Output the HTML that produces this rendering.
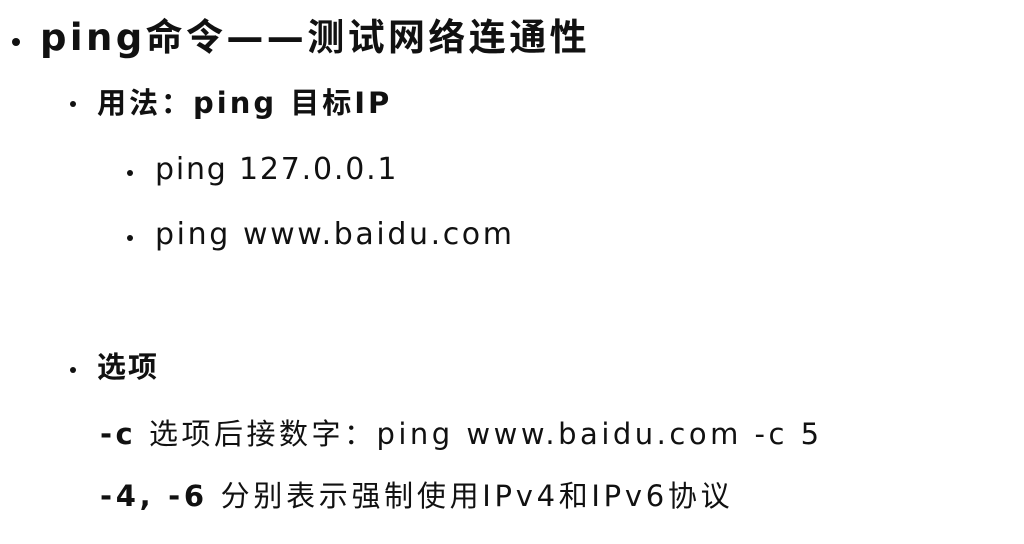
<!DOCTYPE html>
<html><head><meta charset="utf-8"><style>
html,body{margin:0;padding:0;background:#fff;width:1024px;height:544px;overflow:hidden}
body{font-family:"DejaVu Sans","Noto Sans CJK SC",sans-serif;color:#111;position:relative}
.l{position:absolute;white-space:nowrap;line-height:1}
.b{font-weight:bold}
.dot{position:absolute;border-radius:50%;background:#111}
</style></head><body>
<div class="dot" style="left:12px;top:38px;width:8px;height:8px"></div>
<div class="l b" style="left:40px;top:19px;font-size:37px;letter-spacing:3.4px">ping命令——测试网络连通性</div>
<div class="dot" style="left:70px;top:101px;width:6px;height:6px"></div>
<div class="l b" style="left:97px;top:89px;font-size:29px;letter-spacing:3px">用法：ping 目标IP</div>
<div class="dot" style="left:127px;top:170px;width:6px;height:6px"></div>
<div class="l" style="left:155px;top:155px;font-size:30px;letter-spacing:1.8px">ping 127.0.0.1</div>
<div class="dot" style="left:127px;top:235px;width:6px;height:6px"></div>
<div class="l" style="left:155px;top:220px;font-size:30px;letter-spacing:2.6px">ping www.baidu.com</div>
<div class="dot" style="left:70px;top:367px;width:6px;height:6px"></div>
<div class="l b" style="left:97px;top:353px;font-size:29px;letter-spacing:2px">选项</div>
<div class="l" style="left:100px;top:420px;font-size:29px;letter-spacing:3.5px"><b>-c</b> 选项后接数字：ping www.baidu.com -c 5</div>
<div class="l" style="left:100px;top:482px;font-size:29px;letter-spacing:3.7px"><b>-4, -6</b> 分别表示强制使用IPv4和IPv6协议</div>
</body></html>
